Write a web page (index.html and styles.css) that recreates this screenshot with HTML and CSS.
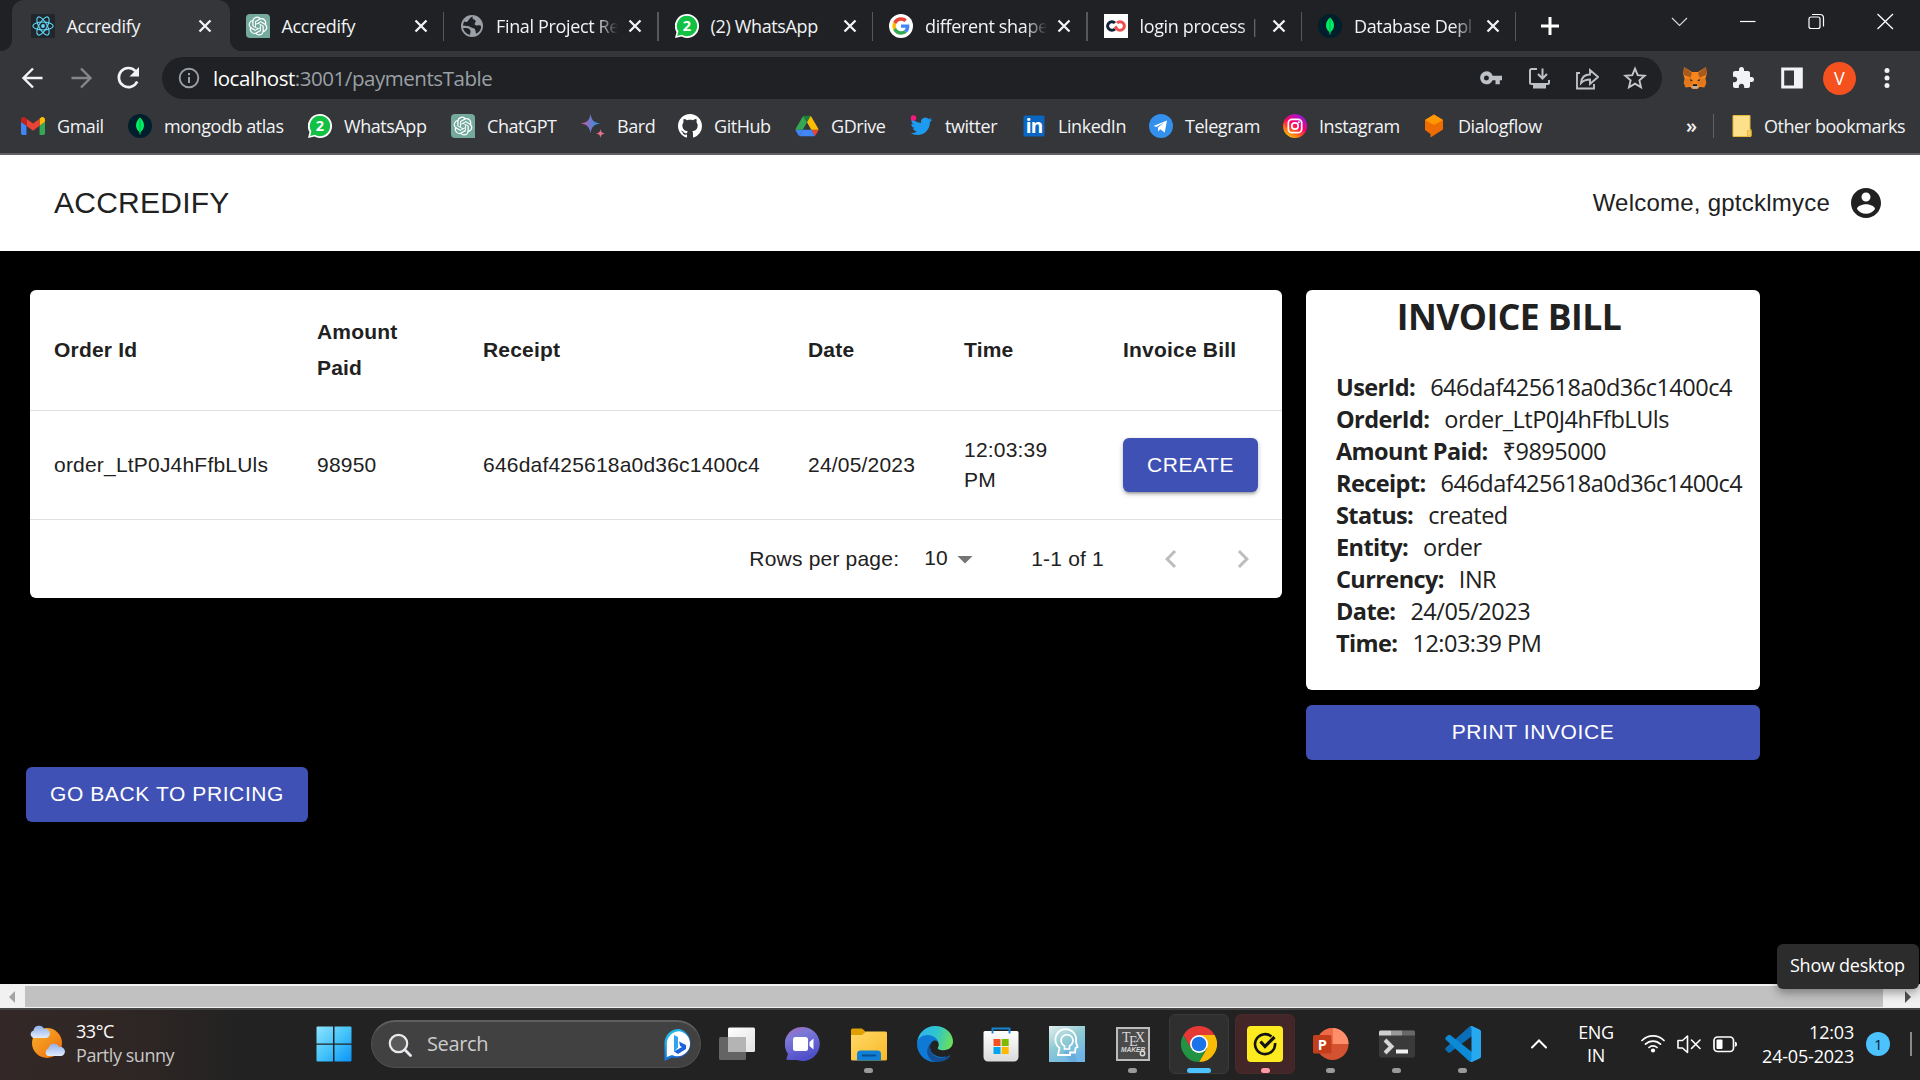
FILE: index.html
```html
<!DOCTYPE html>
<html lang="en">
<head>
<meta charset="utf-8">
<title>Accredify</title>
<link rel="stylesheet" href="styles.css">
</head>
<body>
<svg class="defs" aria-hidden="true">
  <defs>
    <linearGradient id="bardG" x1="0" y1="0" x2="1" y2="0"><stop offset="0" stop-color="#e2627b"/><stop offset=".35" stop-color="#8a6fc4"/><stop offset="1" stop-color="#1b9be8"/></linearGradient>
    <linearGradient id="igG" x1=".2" y1="1" x2=".8" y2="0"><stop offset="0" stop-color="#ffd600"/><stop offset=".3" stop-color="#ff5a1f"/><stop offset=".55" stop-color="#ff0069"/><stop offset="1" stop-color="#8a1bf0"/></linearGradient>
    <linearGradient id="winG" x1="0" y1="0" x2="1" y2="1"><stop offset="0" stop-color="#8fe3ff"/><stop offset=".5" stop-color="#45c4fa"/><stop offset="1" stop-color="#0a94f7"/></linearGradient>
    <linearGradient id="sunG" x1="0" y1="0" x2="1" y2="1"><stop offset="0" stop-color="#f7b32b"/><stop offset="1" stop-color="#ef6c0c"/></linearGradient>
    <linearGradient id="cloudG" x1="0" y1="0" x2="0" y2="1"><stop offset="0" stop-color="#8fb0ea"/><stop offset="1" stop-color="#e3ebfb"/></linearGradient>
    <linearGradient id="bingG" x1="0" y1="0" x2=".6" y2="1"><stop offset="0" stop-color="#22d3ee"/><stop offset="1" stop-color="#1554d1"/></linearGradient>
    <linearGradient id="teamsG" x1="0" y1="0" x2=".4" y2="1"><stop offset="0" stop-color="#a56bb0"/><stop offset=".35" stop-color="#7c78d8"/><stop offset="1" stop-color="#4f4fc9"/></linearGradient>
    <linearGradient id="foldG" x1="0" y1="0" x2="1" y2="1"><stop offset="0" stop-color="#ffd968"/><stop offset="1" stop-color="#f9b928"/></linearGradient>
    <linearGradient id="edgeTop" x1="0" y1=".3" x2="1" y2=".5"><stop offset="0" stop-color="#33b4ee"/><stop offset=".5" stop-color="#2ec4d0"/><stop offset="1" stop-color="#6be05a"/></linearGradient>
    <linearGradient id="headG" x1="0" y1="0" x2=".6" y2="1"><stop offset="0" stop-color="#e4efee"/><stop offset=".5" stop-color="#8fcbd3"/><stop offset="1" stop-color="#6fb6e6"/></linearGradient>
    <linearGradient id="storeG" x1="0" y1="0" x2="0" y2="1"><stop offset="0" stop-color="#fff"/><stop offset="1" stop-color="#dadada"/></linearGradient>
    <linearGradient id="taskG" x1="0" y1="0" x2="1" y2="1"><stop offset="0" stop-color="#fff"/><stop offset="1" stop-color="#e2e2e2"/></linearGradient>
  </defs>
  <symbol id="i-openai" viewBox="0 0 24 24"><path d="M0 4a4 4 0 0 1 4-4h16a4 4 0 0 1 4 4v20H4a4 4 0 0 1-4-4z" fill="#74aa9c"/><path transform="translate(2.6 2.6) scale(.785)" fill="#fff" d="M22.2819 9.8211a5.9847 5.9847 0 0 0-.5157-4.9108 6.0462 6.0462 0 0 0-6.5098-2.9A6.0651 6.0651 0 0 0 4.9807 4.1818a5.9847 5.9847 0 0 0-3.9977 2.9 6.0462 6.0462 0 0 0 .7427 7.0966 5.98 5.98 0 0 0 .511 4.9107 6.051 6.051 0 0 0 6.5146 2.9001A5.9847 5.9847 0 0 0 13.2599 24a6.0557 6.0557 0 0 0 5.7718-4.2058 5.9894 5.9894 0 0 0 3.9977-2.9001 6.0557 6.0557 0 0 0-.7475-7.0729zm-9.022 12.6081a4.4755 4.4755 0 0 1-2.8764-1.0408l.1419-.0804 4.7783-2.7582a.7948.7948 0 0 0 .3927-.6813v-6.7369l2.02 1.1686a.071.071 0 0 1 .038.052v5.5826a4.504 4.504 0 0 1-4.4945 4.4944zm-9.6607-4.1254a4.4708 4.4708 0 0 1-.5346-3.0137l.142.0852 4.783 2.7582a.7712.7712 0 0 0 .7806 0l5.8428-3.3685v2.3324a.0804.0804 0 0 1-.0332.0615L9.74 19.9502a4.4992 4.4992 0 0 1-6.1408-1.6464zM2.3408 7.8956a4.485 4.485 0 0 1 2.3655-1.9728V11.6a.7664.7664 0 0 0 .3879.6765l5.8144 3.3543-2.0201 1.1685a.0757.0757 0 0 1-.071 0l-4.8303-2.7865A4.504 4.504 0 0 1 2.3408 7.872zm16.5963 3.8558L13.1038 8.364 15.1192 7.2a.0757.0757 0 0 1 .071 0l4.8303 2.7913a4.4944 4.4944 0 0 1-.6765 8.1042v-5.6772a.79.79 0 0 0-.407-.667zm2.0107-3.0231l-.142-.0852-4.7735-2.7818a.7759.7759 0 0 0-.7854 0L9.409 9.2297V6.8974a.0662.0662 0 0 1 .0284-.0615l4.8303-2.7866a4.4992 4.4992 0 0 1 6.6802 4.66zM8.3065 12.863l-2.02-1.1638a.0804.0804 0 0 1-.038-.0567V6.0742a4.4992 4.4992 0 0 1 7.3757-3.4537l-.142.0805L8.704 5.459a.7948.7948 0 0 0-.3927.6813zm1.0976-2.3654l2.602-1.4998 2.6069 1.4998v2.9994l-2.5974 1.4997-2.6067-1.4997Z"/></symbol>
  <symbol id="i-whatsapp" viewBox="0 0 24 24"><path d="M12 0a12 12 0 1 1-5.6 22.6L0 24l1.5-6A12 12 0 0 1 12 0z" fill="#fff"/><path d="M12 1.8a10.2 10.2 0 1 1-5.2 19L2.2 22l1.2-4.6A10.2 10.2 0 0 1 12 1.8z" fill="#12c143"/></symbol>
  <symbol id="i-mongo" viewBox="0 0 24 24"><circle cx="12" cy="12" r="12" fill="#001e2b"/><path d="M12 3.6c2.6 2.4 4 5 4 8 0 3.100-1.500 5-3.500 6.600L12.300 20.400h-.6l-.2-2.200C9.500 16.600 8 14.700 8 11.600c0-3 1.400-5.600 4-8z" fill="#00ed64"/><path d="M12 5v15" stroke="#00a34a" stroke-width=".8"/></symbol>
  <symbol id="x" viewBox="0 0 16 16"><path d="M2.500 2.500l11 11M13.500 2.500l-11 11" stroke="#f1f3f4" stroke-width="2.300" fill="none"/></symbol>
</svg>

<header class="browser">
  <div class="tabstrip">
    <div class="tab tab-active">
      <svg class="fav" viewBox="0 0 24 24"><rect width="24" height="24" rx="1.500" fill="#20262b"/><g fill="none" stroke="#61dafb" stroke-width="1.100"><ellipse cx="12" cy="12" rx="10.200" ry="4"/><ellipse cx="12" cy="12" rx="10.200" ry="4" transform="rotate(60 12 12)"/><ellipse cx="12" cy="12" rx="10.200" ry="4" transform="rotate(120 12 12)"/></g><circle cx="12" cy="12" r="1.900" fill="#61dafb"/></svg>
      <span class="tab-title">Accredify</span><svg class="tab-x"><use href="#x"/></svg>
    </div>
    <div class="tab"><svg class="fav"><use href="#i-openai"/></svg><span class="tab-title">Accredify</span><svg class="tab-x"><use href="#x"/></svg></div>
    <div class="tab tab-sep"><svg class="fav" viewBox="0 0 24 24"><circle cx="12" cy="12" r="11" fill="#9aa0a6"/><path d="M13 2.500c-1 1.500-.5 2.500 1 3 2 .6 2 2 1 3.500-1 1.300 0 2.500 2 2.500s3.500-.8 4.200 1.200c-.3 3-2.200 5.800-5 7-.8-1.500-.4-3.200-1.400-4.700-1-1.400-3.300-.8-4.600-2C9 11.900 6 12 3 11.500c0 0 .2-2.600 1.300-4 2 .8 2.700 1 3.700-.5s2-4 5-4.500zM6 14c2.500 0 4 1.300 4.500 3 .4 1.300-.5 2-.5 4-3.500-.8-6-3.500-7-7z" fill="#202124"/></svg><span class="tab-title fade">Final Project Re</span><svg class="tab-x"><use href="#x"/></svg></div>
    <div class="tab tab-sep"><svg class="fav" viewBox="0 0 24 24"><use href="#i-whatsapp"/><text class="wa-count" x="12" y="17.200">2</text></svg><span class="tab-title">(2) WhatsApp</span><svg class="tab-x"><use href="#x"/></svg></div>
    <div class="tab tab-sep"><svg class="fav" viewBox="0 0 24 24"><circle cx="12" cy="12" r="12" fill="#fff"/><g transform="translate(3.300 3.300) scale(.363)"><path fill="#EA4335" d="M24 9.500c3.540 0 6.710 1.220 9.210 3.600l6.850-6.850C35.900 2.380 30.470 0 24 0 14.620 0 6.510 5.380 2.560 13.220l7.980 6.190C12.430 13.720 17.740 9.500 24 9.500z"/><path fill="#4285F4" d="M46.980 24.550c0-1.570-.15-3.090-.38-4.550H24v9.020h12.940c-.58 2.960-2.260 5.480-4.780 7.180l7.730 6c4.510-4.180 7.090-10.360 7.090-17.650z"/><path fill="#FBBC05" d="M10.530 28.590c-.48-1.450-.76-2.990-.76-4.590s.27-3.140.76-4.590l-7.980-6.190C.92 16.460 0 20.120 0 24c0 3.880.92 7.540 2.560 10.780l7.970-6.190z"/><path fill="#34A853" d="M24 48c6.480 0 11.930-2.130 15.890-5.810l-7.730-6c-2.150 1.450-4.920 2.300-8.160 2.300-6.260 0-11.570-4.220-13.470-9.910l-7.980 6.190C6.510 42.620 14.620 48 24 48z"/></g></svg><span class="tab-title fade">different shape</span><svg class="tab-x"><use href="#x"/></svg></div>
    <div class="tab tab-sep"><svg class="fav" viewBox="0 0 24 24"><rect width="24" height="24" fill="#fff"/><path d="M11 9a4.300 4.300 0 1 0 0 6" fill="none" stroke="#0b2239" stroke-width="3"/><path d="M13 9a4.300 4.300 0 1 1 0 6l-2-2.500" fill="none" stroke="#f04e4e" stroke-width="3"/></svg><span class="tab-title fade">login process |</span><svg class="tab-x"><use href="#x"/></svg></div>
    <div class="tab tab-sep"><svg class="fav"><use href="#i-mongo"/></svg><span class="tab-title fade">Database Depl</span><svg class="tab-x"><use href="#x"/></svg></div>
    <div class="newtab"><svg width="20" height="20" viewBox="0 0 20 20"><path d="M10 1v18M1 10h18" stroke="#fff" stroke-width="3"/></svg></div>
    <div class="winctl">
      <svg width="68" height="44" viewBox="0 0 68 44"><path d="M26 18l7.500 7.500L41 18" fill="none" stroke="#d5d6d7" stroke-width="1.200"/></svg>
      <svg width="68" height="44" viewBox="0 0 68 44"><path d="M26 21.500h15.500" stroke="#fff" stroke-width="1.200"/></svg>
      <svg width="69" height="44" viewBox="0 0 69 44"><rect x="27" y="17" width="11" height="11.500" rx="2" fill="none" stroke="#fff" stroke-width="1.200"/><path d="M30 14.500h8a3.500 3.500 0 0 1 3.500 3.500v8.500" fill="none" stroke="#fff" stroke-width="1.200"/></svg>
      <svg width="69" height="44" viewBox="0 0 69 44"><path d="M26.500 14l15.500 15M42 14L26.500 29" stroke="#fff" stroke-width="1.300"/></svg>
    </div>
  </div>

  <div class="toolbar">
    <div class="nav">
      <svg viewBox="0 0 48 48"><path d="M42.500 24H24.500M33 14.500L23.500 24 33 33.500" fill="none" stroke="#f1f3f4" stroke-width="2.400"/></svg>
      <svg viewBox="0 0 48 48"><path d="M23.500 24h18M33 14.500l9.500 9.500-9.500 9.500" fill="none" stroke="#85878a" stroke-width="2.400"/></svg>
      <svg viewBox="0 0 48 48"><path d="M41.200 27.500A9.600 9.600 0 1 1 39.500 17" fill="none" stroke="#f1f3f4" stroke-width="2.600"/><path d="M43 13v9.500h-9.500z" fill="#f1f3f4"/></svg>
    </div>
    <div class="omnibox">
      <svg class="info" viewBox="0 0 22 22"><circle cx="11" cy="11" r="9.300" fill="none" stroke="#9aa0a6" stroke-width="1.900"/><path d="M11 10v6M11 6v2.200" stroke="#9aa0a6" stroke-width="2"/></svg>
      <div class="url"><span class="host">localhost</span>:3001/paymentsTable</div>
      <div class="omni-icons">
        <svg viewBox="0 0 24 24"><path fill-rule="evenodd" fill="#bdc1c6" d="M7.500 5a6.500 6.500 0 0 1 6.100 4.500H23V14h-2.200v4h-4.300v-4h-2.900A6.500 6.500 0 1 1 7.500 5zm0 4.200a2.500 2.500 0 1 0 0 5 2.500 2.500 0 0 0 0-5z" transform="translate(0 .3)"/></svg>
        <svg viewBox="0 0 24 24"><path d="M10 3H4.500A1.500 1.500 0 0 0 3 4.500v12A1.500 1.500 0 0 0 4.500 18h16a1.500 1.500 0 0 0 1.500-1.500V14M15.500 2.500v9M11 8l4.500 4.500L20 8" fill="none" stroke="#bdc1c6" stroke-width="2"/><path d="M6 19h13v3.500H6z" fill="#bdc1c6"/></svg>
        <svg viewBox="0 0 24 24"><path d="M5 7H2v15.500h17V18M6 17c.5-6 4-8.500 9-8.500V4l8 7-8 7v-4.500c-4 0-6.500.8-9 3.500z" fill="none" stroke="#bdc1c6" stroke-width="1.900"/></svg>
        <svg viewBox="0 0 24 24"><path d="M12 2.700l2.700 6.500 7 .6-5.300 4.600 1.600 6.900-6-3.700-6 3.700 1.600-6.900L2.300 9.800l7-.6z" fill="none" stroke="#c4c7cb" stroke-width="1.900"/></svg>
      </div>
    </div>
    <div class="ext">
      <svg viewBox="0 0 24 24"><path d="M1 1l8 5h6l8-5 .8 7-1.500 5 1 4-2 4.500-4.500-.8L14.500 23h-5l-2.300-2.300-4.500.8-2-4.500 1-4L.2 8z" fill="#f6851b"/><path d="M1 1l8 6-1.500 4.500L.8 9zM23 1l-8 6 1.500 4.500L23.200 9z" fill="#a85a1e"/><path d="M1.700 13l6-1.500L10 15l-1 3.500-6 2.200-1.900-4zM22.300 13l-6-1.500L14 15l1 3.500 6 2.200 1.900-4z" fill="#e4761b"/><path d="M7 13l3 1.500-2.500.8zM17 13l-3 1.500 2.500.8z" fill="#233447"/><path d="M9.500 18.500h5l.5 3-1 1h-4l-1-1z" fill="#c0ad9e"/><path d="M10 18.300h4l.3 1.700H9.700z" fill="#161616"/></svg>
      <svg viewBox="0 0 24 24"><path fill="#f1f3f4" d="M20.500 11H19V7c0-1.100-.9-2-2-2h-4V3.500a2.500 2.500 0 0 0-5 0V5H4c-1.100 0-1.990.9-1.990 2v3.800H3.500c1.490 0 2.700 1.210 2.700 2.700s-1.210 2.700-2.700 2.700H2V20c0 1.100.9 2 2 2h3.800v-1.500c0-1.490 1.210-2.700 2.700-2.700s2.700 1.210 2.700 2.700V22H17c1.100 0 2-.9 2-2v-4h1.500a2.500 2.500 0 0 0 0-5z"/></svg>
      <svg viewBox="0 0 24 24"><path d="M1.200 1.500h21.600v21H1.200z" fill="#f1f3f4"/><path d="M4.200 4.500h9.800v15H4.200z" fill="#35363a"/></svg>
      <span class="avatar">V</span>
      <svg viewBox="0 0 24 24"><g fill="#f1f3f4"><circle cx="12" cy="4.500" r="2.500"/><circle cx="12" cy="12" r="2.500"/><circle cx="12" cy="19.500" r="2.500"/></g></svg>
    </div>
  </div>

  <div class="bookmarks">
    <a class="bm"><svg viewBox="52 42 88 66"><path fill="#4285f4" d="M58 108h14V74L52 59v43c0 3.320 2.690 6 6 6"/><path fill="#34a853" d="M120 108h14c3.320 0 6-2.690 6-6V59l-20 15"/><path fill="#fbbc04" d="M120 48v26l20-15v-8c0-7.420-8.470-11.650-14.400-7.200"/><path fill="#ea4335" d="M72 74V48l24 18 24-18v26L96 92"/><path fill="#c5221f" d="M52 51v8l20 15V48l-5.600-4.200c-5.940-4.450-14.400-.22-14.400 7.200"/></svg>Gmail</a>
    <a class="bm"><svg><use href="#i-mongo"/></svg>mongodb atlas</a>
    <a class="bm"><svg viewBox="0 0 24 24"><use href="#i-whatsapp"/><text class="wa-count" x="12" y="17.200">2</text></svg>WhatsApp</a>
    <a class="bm"><svg><use href="#i-openai"/></svg>ChatGPT</a>
    <a class="bm"><svg viewBox="0 0 24 24"><path d="M9.500 0c1 6 3.500 8.500 9.500 9.500-6 1-8.500 3.500-9.500 9.500C8.500 13 6 10.500 0 9.500 6 8.500 8.500 6 9.500 0z" fill="url(#bardG)"/><path d="M19.500 15c.5 3 1.500 4 4.500 4.500-3 .5-4 1.500-4.500 4.500-.5-3-1.500-4-4.500-4.500 3-.5 4-1.500 4.500-4.500z" fill="#e0708c"/></svg>Bard</a>
    <a class="bm"><svg viewBox="0 0 16 16"><path fill="#fff" d="M8 0C3.580 0 0 3.580 0 8c0 3.540 2.290 6.530 5.470 7.590.4.070.55-.17.55-.38 0-.19-.01-.82-.01-1.490-2.010.37-2.530-.49-2.690-.94-.09-.23-.48-.94-.82-1.130-.28-.15-.68-.52-.01-.53.63-.01 1.080.58 1.230.82.72 1.210 1.870.87 2.330.66.070-.52.28-.87.51-1.070-1.780-.2-3.640-.89-3.640-3.950 0-.87.31-1.590.82-2.150-.08-.2-.36-1.020.08-2.120 0 0 .67-.21 2.200.82.64-.18 1.320-.27 2-.27s1.360.09 2 .27c1.530-1.040 2.200-.82 2.200-.82.44 1.100.16 1.920.08 2.120.51.56.82 1.270.82 2.150 0 3.070-1.870 3.750-3.650 3.950.29.25.54.73.54 1.480 0 1.070-.01 1.930-.01 2.200 0 .21.15.46.55.38A8.010 8.010 0 0 0 16 8c0-4.420-3.580-8-8-8z"/></svg>GitHub</a>
    <a class="bm"><svg viewBox="-2 -4 91.300 86"><path d="m6.600 66.850 3.850 6.650c.8 1.400 1.950 2.500 3.300 3.300l13.750-23.800h-27.500c0 1.550.4 3.100 1.200 4.500z" fill="#4285f4"/><path d="m43.650 25-13.750-23.800c-1.350.8-2.500 1.900-3.300 3.300l-25.400 44a9.060 9.060 0 0 0-1.200 4.500h27.500z" fill="#34a853"/><path d="m73.550 76.800c1.350-.8 2.500-1.900 3.300-3.300l1.600-2.750 7.650-13.250c.8-1.400 1.200-2.950 1.200-4.500h-27.502l5.852 11.500z" fill="#ea4335"/><path d="m43.650 25 13.750-23.800c-1.350-.8-2.900-1.200-4.500-1.200h-18.500c-1.600 0-3.150.45-4.500 1.200z" fill="#188038"/><path d="m59.800 53h-32.300l-13.750 23.800c1.350.8 2.900 1.200 4.500 1.200h50.800c1.600 0 3.150-.45 4.500-1.200z" fill="#4285f4"/><path d="m73.400 26.500-12.700-22c-.8-1.400-1.950-2.500-3.300-3.300l-13.750 23.800 16.150 28h27.450c0-1.550-.4-3.100-1.200-4.500z" fill="#fbbc04"/></svg>GDrive</a>
    <a class="bm"><svg viewBox="0 0 24 24"><path fill="#1d9bf0" transform="translate(1.500 1.500) scale(.9)" d="M23.953 4.570a10 10 0 01-2.825.775 4.958 4.958 0 002.163-2.723c-.951.555-2.005.959-3.127 1.184a4.920 4.920 0 00-8.384 4.482C7.690 8.095 4.067 6.130 1.640 3.162a4.822 4.822 0 00-.666 2.475c0 1.710.87 3.213 2.188 4.096a4.904 4.904 0 01-2.228-.616v.06a4.923 4.923 0 003.946 4.827 4.996 4.996 0 01-2.212.085 4.936 4.936 0 004.604 3.417 9.867 9.867 0 01-6.102 2.105c-.39 0-.779-.023-1.170-.067a13.995 13.995 0 007.557 2.209c9.053 0 13.998-7.496 13.998-13.985 0-.21 0-.42-.015-.63A9.935 9.935 0 0024 4.590z"/><circle cx="4.500" cy="4" r="2.700" fill="#f91880"/></svg>twitter</a>
    <a class="bm"><svg viewBox="0 0 24 24"><rect x="1.500" y="1.500" width="21" height="21" rx="1.500" fill="#0a66c2"/><text class="li-mark" x="12" y="19.300">in</text></svg>LinkedIn</a>
    <a class="bm"><svg viewBox="0 0 24 24"><circle cx="12" cy="12" r="12" fill="#3390ec"/><path d="M4.500 12L18 6.500l-2.300 12-4.400-3.300-2.200 2.300-.1-4 6-5-7.500 4.600z" fill="#fff"/></svg>Telegram</a>
    <a class="bm"><svg viewBox="0 0 24 24"><circle cx="12" cy="12" r="12" fill="url(#igG)"/><rect x="5.300" y="5.300" width="13.400" height="13.400" rx="3.800" fill="none" stroke="#fff" stroke-width="1.700"/><circle cx="12" cy="12" r="3.200" fill="none" stroke="#fff" stroke-width="1.700"/><circle cx="15.800" cy="8.200" r="1" fill="#fff"/></svg>Instagram</a>
    <a class="bm"><svg viewBox="0 0 24 24"><path d="M12 .5L21 6v9.500L8.500 23.500V20L3 16V6z" fill="#ef6c00"/><path d="M12 .5L21 6l-9 5-9-5z" fill="#ff9800"/></svg>Dialogflow</a>
    <span class="more">»</span>
    <a class="bm other"><svg viewBox="0 0 20 24"><path d="M1 1.500h17v14h1v7H1z" fill="#ffe08a" stroke="#e3b93e"/><path d="M15.500 22v-5.500h3.500v5.500z" fill="#f7cf5c" stroke="#e3b93e"/></svg>Other bookmarks</a>
  </div>
</header>

<main class="page">
  <div class="appbar">
    <span class="brand">ACCREDIFY</span>
    <div class="user">Welcome, gptcklmyce<svg viewBox="0 0 24 24"><path fill="#212121" d="M12 2C6.480 2 2 6.480 2 12s4.480 10 10 10 10-4.480 10-10S17.520 2 12 2zm0 3c1.660 0 3 1.340 3 3s-1.340 3-3 3-3-1.340-3-3 1.340-3 3-3zm0 14.200c-2.500 0-4.710-1.280-6-3.220.03-1.990 4-3.080 6-3.080 1.990 0 5.970 1.090 6 3.080-1.290 1.940-3.500 3.220-6 3.220z"/></svg></div>
  </div>
  <div class="content">
    <div class="left">
      <section class="card orders">
        <table>
          <colgroup><col class="c1"><col class="c2"><col class="c3"><col class="c4"><col class="c5"><col class="c6"></colgroup>
          <thead><tr><th>Order Id</th><th>Amount<br>Paid</th><th>Receipt</th><th>Date</th><th>Time</th><th>Invoice Bill</th></tr></thead>
          <tbody><tr><td>order_LtP0J4hFfbLUls</td><td>98950</td><td>646daf425618a0d36c1400c4</td><td>24/05/2023</td><td>12:03:39<br>PM</td><td><button class="btn raised">CREATE</button></td></tr></tbody>
        </table>
        <div class="pager">
          <span class="rpp">Rows per page:</span><span class="ten">10</span>
          <svg class="caret" viewBox="0 0 24 24"><path d="M7 10l5 5 5-5z" fill="#757575"/></svg>
          <span class="range">1-1 of 1</span>
          <svg viewBox="0 0 24 24"><path d="M15.410 7.410L14 6l-6 6 6 6 1.410-1.410L10.830 12z" fill="#bdbdbd"/></svg>
          <svg viewBox="0 0 24 24"><path d="M10 6L8.590 7.410 13.170 12l-4.580 4.590L10 18l6-6z" fill="#bdbdbd"/></svg>
        </div>
      </section>
      <button class="btn back">GO BACK TO PRICING</button>
    </div>
    <div class="right">
      <section class="card invoice">
        <h1>INVOICE BILL</h1>
        <dl>
          <div><dt>UserId:</dt><dd>646daf425618a0d36c1400c4</dd></div>
          <div><dt>OrderId:</dt><dd>order_LtP0J4hFfbLUls</dd></div>
          <div><dt>Amount Paid:</dt><dd>₹9895000</dd></div>
          <div><dt>Receipt:</dt><dd>646daf425618a0d36c1400c4</dd></div>
          <div><dt>Status:</dt><dd>created</dd></div>
          <div><dt>Entity:</dt><dd>order</dd></div>
          <div><dt>Currency:</dt><dd>INR</dd></div>
          <div><dt>Date:</dt><dd>24/05/2023</dd></div>
          <div><dt>Time:</dt><dd>12:03:39 PM</dd></div>
        </dl>
      </section>
      <button class="btn print">PRINT INVOICE</button>
    </div>
  </div>
</main>

<div class="scrollbar">
  <svg class="sb-arrow" viewBox="0 0 25 21"><path d="M15 5v12l-6-6z" fill="#a3a3a3"/></svg>
  <div class="thumb"></div>
  <svg class="sb-arrow sb-right" viewBox="0 0 37 21"><path d="M22 5v12l6-6z" fill="#505050"/></svg>
</div>

<footer class="taskbar">
  <div class="weather">
    <svg viewBox="0 0 36 36"><circle cx="18" cy="19" r="15" fill="url(#sunG)"/><path d="M4 14a4 4 0 0 1 .5-7.500A5.500 5.500 0 0 1 15 5a4.600 4.600 0 0 1 2.500 9z" fill="url(#cloudG)"/><path d="M19 32a4 4 0 0 1 .5-7.500A5.500 5.500 0 0 1 30 23a4.600 4.600 0 0 1 2.500 9z" fill="url(#cloudG)"/></svg>
    <div><div class="temp">33°C</div><div class="cond">Partly sunny</div></div>
  </div>
  <div class="app"><svg viewBox="0 0 36 36"><path fill="url(#winG)" d="M1.500.5H17v17H.5v-16a1 1 0 0 1 1-1zM18.500.5h16a1 1 0 0 1 1 1v16h-17zM.5 18.800H17v16.700H1.500a1 1 0 0 1-1-1zM18.500 18.800h17v15.700a1 1 0 0 1-1 1h-16z"/></svg></div>
  <div class="search">
    <svg width="24" height="24" viewBox="0 0 24 24"><circle cx="10.500" cy="10.500" r="8.700" fill="#5a5a5a" stroke="#e8eaed" stroke-width="2.200"/><path d="M16.800 16.800l5.700 5.700" stroke="#e8eaed" stroke-width="2.800" stroke-linecap="round"/></svg>
    <span>Search</span>
    <svg class="bing" width="30" height="32" viewBox="0 0 30 32"><path d="M15.500 0A14.500 14.500 0 1 1 8 28.500L.5 32V16A14.500 14.500 0 0 1 15.500 0z" fill="url(#bingG)"/><path d="M15.500 2.200A12.600 12.600 0 1 1 8 26L2.800 28V15A12.600 12.600 0 0 1 15.500 2.200z" fill="#fff"/><path d="M10 6l4 2v10.500L10 23z" fill="#2fa5f2"/><path d="M15 12.500l7 3.500v4L14 25l-4-2.500 8-4.500-1.800-1z" fill="#1b62e0"/></svg>
  </div>
  <div class="apps">
    <div class="app"><svg viewBox="0 0 36 36"><path d="M0 12.500A1.500 1.500 0 0 1 1.500 11H27v21.500a1.500 1.500 0 0 1-1.500 1.500h-24A1.500 1.500 0 0 1 0 32.500z" fill="#646464"/><rect x="9" y="1.500" width="27" height="24.500" rx="1.500" fill="url(#taskG)"/><path d="M9 11h18v15H10.500A1.500 1.500 0 0 1 9 24.500z" fill="#b4b4b4"/></svg></div>
    <div class="app"><svg viewBox="0 0 36 36"><path d="M18 1a17 17 0 1 1-6 33H2.500c-1 0-1.500-.8-1-1.500l1.500-4.500A17 17 0 0 1 18 1z" fill="url(#teamsG)"/><rect x="8" y="11" width="15" height="14" rx="2.500" fill="#fff"/><path d="M24.500 16l4-3.500v11l-4-3.500z" fill="#fff"/></svg></div>
    <div class="app"><svg viewBox="0 0 36 36"><path d="M0 4a1.500 1.500 0 0 1 1.500-1.500H11L15 6h-1v5H0z" fill="#e0a100"/><path d="M0 9h11l4-3.500h19.500A1.500 1.500 0 0 1 36 7v26a1.500 1.500 0 0 1-1.500 1.500h-33A1.500 1.500 0 0 1 0 33z" fill="url(#foldG)"/><path d="M6 34.500V28a3.500 3.500 0 0 1 3.500-3.500h17A3.500 3.500 0 0 1 30 28v6.500z" fill="#0f80d6"/><path d="M11.500 29.500h13" stroke="#0a4f90" stroke-width="1.800" stroke-linecap="round"/></svg><i></i></div>
    <div class="app"><svg viewBox="0 0 36 36"><path d="M.2 16C1.200 7 8.500 0 18 0c10.500 0 18 7.500 18 15.500 0 5.500-4.500 8.700-9.500 8.700-4 0-6.500-1.200-5.500-2.700 1.300-2 1-5-1-7C16 10.500 5 9.500.2 16z" fill="url(#edgeTop)"/><path d="M0 18C0 12 5.500 9 10.500 9c5 0 9.500 3 10.500 6.500-3.500-2.500-8 .5-8 5.500 0 7 7.500 11.500 16 9.500-3 3.500-7 5.500-11.500 5.500C8 36 0 28 0 18z" fill="#0f7ad6"/><path d="M13.500 17.500c-2.500 8 3.500 15 12 14.200 3-.3 5.500-1.700 6.500-2.200.8-.4 1.500.2 1 1C29.500 35 24 36 19.500 36 10 35 7.500 23 13.500 17.500z" fill="#124f93"/></svg></div>
    <div class="app"><svg viewBox="0 0 36 36"><path d="M.5 6.500a1.500 1.500 0 0 1 1.500-1.500h32a1.500 1.500 0 0 1 1.500 1.500V31a4.500 4.500 0 0 1-4.500 4.500H5A4.500 4.500 0 0 1 .5 31z" fill="url(#storeG)"/><path d="M9.500 7.500V2.500h17v5" fill="none" stroke="#1686d0" stroke-width="1.900"/><path d="M10.500 13h7v7h-7z" fill="#f25022"/><path d="M18.700 13h7v7h-7z" fill="#7fba00"/><path d="M10.500 21h7v7h-7z" fill="#00a4ef"/><path d="M18.700 21h7v7h-7z" fill="#ffb900"/></svg></div>
    <div class="app"><svg viewBox="0 0 36 36"><path fill="url(#headG)" d="M0 0h36v36H0z"/><path d="M14 26l5-2 7 4 2 8H22z" fill="#5b9fd8" opacity=".45"/><path d="M9 29l1.500-7A10.500 10.500 0 1 1 27 16l1.500 5-2 1-.5 4.500h-5V29z" fill="none" stroke="#fff" stroke-width="1.800"/><path d="M15.500 23v-3a6 6 0 1 1 5 0v3z" fill="none" stroke="#fff" stroke-width="1.700"/></svg></div>
    <div class="app"><svg viewBox="0 0 36 36"><rect x="2" y="2" width="32" height="32" fill="#4a4a4a" stroke="#bcbcbc" stroke-width="2"/><g class="tex"><text x="7" y="16">T</text><text x="14" y="19.500">E</text><text x="20" y="16">X</text><text class="maker" x="6" y="25.500">MAKER</text></g><circle cx="27.500" cy="27.500" r="2.200" fill="none" stroke="#d8d8d8" stroke-width="1.500"/></svg><i></i></div>
    <div class="app app-on"><svg viewBox="0 0 48 48"><path d="M44.800 12A24 24 0 0 1 24 48l10.400-18L24 12z" fill="#fbbc05"/><path d="M3.200 12A24 24 0 0 0 24 48l10.400-18H13.600z" fill="#229342"/><path d="M24 12h20.800A24 24 0 0 0 3.200 12l10.400 18z" fill="#e53935"/><circle cx="24" cy="24" r="12" fill="#fff"/><circle cx="24" cy="24" r="9.800" fill="#1a73e8"/></svg><i class="run"></i></div>
    <div class="app app-alert"><svg viewBox="0 0 36 36"><rect width="36" height="36" rx="4" fill="#fdeb1f"/><path d="M24.500 10.500A10 10 0 1 0 28 17" fill="none" stroke="#141414" stroke-width="2.600"/><path d="M13.500 15.500l4.500 5 9.500-9.500" fill="none" stroke="#141414" stroke-width="3.200"/></svg><i></i></div>
    <div class="app"><svg viewBox="0 0 36 36"><circle cx="19.500" cy="18" r="16" fill="#d35230"/><path d="M19.500 2a16 16 0 0 1 16 16h-16z" fill="#ff8f6b"/><path d="M19.500 2v16H3.500a16 16 0 0 1 16-16z" fill="#ed6c47"/><rect x="0" y="9" width="18.500" height="18.500" rx="1.500" fill="#c43e1c"/><text class="ppt" x="9.200" y="23.500">P</text></svg><i></i></div>
    <div class="app"><svg viewBox="0 0 36 36"><rect x="0" y="4.500" width="36" height="27" rx="2" fill="#3a3a3a"/><path d="M0 9.500v-3.500a1.500 1.500 0 0 1 1.500-1.500H12v5z" fill="#d0d0d0"/><path d="M12 4.500h11v5H12z" fill="#9a9a9a"/><path d="M23 4.500h11.500A1.500 1.500 0 0 1 36 6v3.500H23z" fill="#686868"/><path d="M6 14l6.500 6.500L6 27" fill="none" stroke="#d6d6d6" stroke-width="4"/><path d="M17 25.500h12" stroke="#f2f2f2" stroke-width="4"/></svg><i></i></div>
    <div class="app"><svg viewBox="0 0 36 36"><path d="M27 0l-3 1L1 21.500c-1 1-1 2 0 3l2 1.800c.8.700 1.700.700 2.500 0L27 10z" fill="#0a6fb8"/><path d="M27 36l-3-1L1 14c-1-1-1-2 0-3l2-1.800c.8-.7 1.700-.7 2.500 0L27 26z" fill="#0c8ad6"/><path d="M24.500 35.200c1.200 0 2-.9 2-2V2.800c0-1.200-.8-2-2-2L27 0l7.500 3.500c1 .5 1.500 1.200 1.500 2.300v24.400c0 1.100-.5 1.800-1.500 2.300L27 36z" fill="#27a9f2"/></svg><i></i></div>
  </div>
  <div class="tray">
    <svg class="t-chev" viewBox="0 0 48 24"><path d="M17 15.500l7-7 7 7" fill="none" stroke="#fff" stroke-width="2" stroke-linecap="round"/></svg>
    <div class="lang">ENG<br>IN</div>
    <div class="status">
      <svg viewBox="0 0 24 24"><g fill="none" stroke="#fff" stroke-width="1.700" stroke-linecap="round"><path d="M1 8.500a15.500 15.500 0 0 1 22 0M4.500 12.200a10.500 10.500 0 0 1 15 0M8 15.500a5.700 5.700 0 0 1 8 0"/></g><circle cx="12" cy="18.500" r="2.100" fill="#fff"/></svg>
      <svg viewBox="0 0 24 24"><path d="M10.500 4v16.500L5.500 16H1V8.500h4.500z" fill="none" stroke="#fff" stroke-width="1.600" stroke-linejoin="round"/><path d="M14.500 8l8.500 8.500M23 8l-8.500 8.500" stroke="#fff" stroke-width="1.600" stroke-linecap="round"/></svg>
      <svg viewBox="0 0 24 24"><rect x="1" y="5" width="19.500" height="14.500" rx="3.500" fill="none" stroke="#fff" stroke-width="1.700"/><rect x="3.500" y="7.500" width="6" height="9.500" rx="1" fill="#fff"/><path d="M22 9.800c1.300.2 2 1 2 2.400s-.7 2.300-2 2.500z" fill="#fff"/></svg>
    </div>
    <div class="clock">12:03<br>24-05-2023</div>
    <span class="badge">1</span>
    <span class="peek"></span>
  </div>
</footer>
<div class="tooltip">Show desktop</div>
</body>
</html>
```
FILE: styles.css
```css
* { box-sizing: border-box; }
html, body { margin: 0; height: 100%; overflow: hidden; }
body {
  display: flex;
  flex-direction: column;
  width: 1920px;
  height: 1080px;
  font-family: "Open Sans", "Noto Sans", sans-serif;
  font-size: 18px;
  letter-spacing: -.35px;
  background: #000;
  white-space: nowrap;
}
svg { display: block; flex: none; }
.defs { position: absolute; width: 0; height: 0; }

/* lettering inside icons */
.wa-count, .li-mark, .ppt { font-weight: 700; text-anchor: middle; letter-spacing: 0; fill: #fff; }
.wa-count { font-size: 14.5px; }
.li-mark { font-size: 19px; letter-spacing: -.8px; }
.ppt { font-size: 14.5px; }
.tex { fill: #d8d8d8; font: 14px "Liberation Serif", serif; letter-spacing: 0; }
.maker { font: italic 700 6.6px "Liberation Sans", sans-serif; }

/* browser chrome */
.browser { height: 155px; flex: none; background: #35363a; border-bottom: 2px solid #5f6165; color: #f1f3f4; }
.tabstrip { display: flex; height: 51px; padding-left: 15px; background: #202124; }
.tab { position: relative; display: flex; align-items: center; width: 214.5px; height: 51px; padding: 1px 16px 0 15.5px; }
.tab .fav { width: 24px; height: 24px; }
.tab-title { flex: 1; margin: 0 8px 0 12px; line-height: 26px; }
.fade { -webkit-mask-image: linear-gradient(90deg, #000 100px, transparent 122px); mask-image: linear-gradient(90deg, #000 100px, transparent 122px); }
.tab-x { width: 16px; height: 16px; margin-bottom: 1px; }
.tab-active { background: #35363a; border-radius: 12px 12px 0 0; width: 218px; margin: 0 0 0 -3px; padding: 1px 17px 0 18.5px; }
.tab-active::before, .tab-active::after { content: ""; position: absolute; bottom: 0; width: 12px; height: 12px; }
.tab-active::before { left: -12px; background: radial-gradient(circle at 0 0, transparent 12px, #35363a 12.5px); }
.tab-active::after { right: -12px; background: radial-gradient(circle at 100% 0, transparent 12px, #35363a 12.5px); }
.tab-sep::before { content: ""; position: absolute; left: -2px; top: 12px; width: 1.5px; height: 29px; background: #56585c; }
.tabstrip .tab:nth-child(7)::after { content: ""; position: absolute; right: 1px; top: 12px; width: 1.5px; height: 29px; background: #56585c; }
.newtab { display: flex; align-items: center; justify-content: center; width: 65px; height: 51px; }
.winctl { display: flex; margin-left: auto; }

.toolbar { display: flex; align-items: center; height: 54px; padding-right: 9px; }
.nav { display: flex; width: 162px; }
.nav svg { width: 48px; height: 48px; }
.omnibox { display: flex; align-items: center; width: 1500px; height: 42px; padding: 0 15px 0 16px; border-radius: 21px; background: #202124; }
.info { width: 22px; height: 22px; }
.url { margin-left: 13px; font-size: 20.5px; letter-spacing: -.45px; color: #9aa0a6; line-height: 30px; }
.host { color: #fff; }
.omni-icons { display: flex; gap: 24px; margin-left: auto; }
.omni-icons svg, .ext svg { width: 24px; height: 24px; }
.ext { display: flex; align-items: center; justify-content: space-between; flex: 1; padding: 0 12px 0 21px; }
.avatar { width: 33px; height: 33px; margin: 0 -5px; border-radius: 50%; background: #f4511e; color: #fff; font-size: 18px; line-height: 33px; text-align: center; }

.bookmarks { display: grid; grid-template-columns: 107px 180px 143px 130px 97px 117px 114px 113px 127px 134px 139px 240px 51px 1fr; align-items: center; height: 42px; padding-left: 21px; letter-spacing: -.45px; }
.bm { display: flex; align-items: center; gap: 12px; line-height: 26px; }
.bm svg { width: 24px; height: 24px; }
.more { padding-left: 24px; font-size: 20px; font-weight: 600; line-height: 24px; }
.other { padding-left: 18px; height: 24px; border-left: 1.5px solid #5f6165; }
.other svg { width: 20px; }

/* web page */
.page { height: 829px; flex: none; background: #000; font-family: "Liberation Sans", Arial, sans-serif; letter-spacing: .2px; color: #212121; }
.appbar { display: flex; align-items: center; justify-content: space-between; height: 96px; padding: 0 36px 0 54px; background: #fff; }
.brand { font-size: 30px; line-height: 46px; letter-spacing: .25px; padding-bottom: 1px; }
.user { display: flex; align-items: center; gap: 18px; font-size: 24px; letter-spacing: .23px; }
.user svg { width: 36px; height: 36px; }
.content { display: flex; align-items: flex-start; gap: 24px; padding: 39px 0 0 30px; }
.card { background: #fff; border-radius: 6px; overflow: hidden; }
.left { width: 1252px; }
.orders { height: 308px; font-size: 21px; }
.orders table { width: 1252px; border-collapse: separate; border-spacing: 0; table-layout: fixed; }
.c1 { width: 263px; } .c2 { width: 166px; } .c3 { width: 325px; } .c4 { width: 156px; } .c5 { width: 159px; } .c6 { width: 183px; }
th, td { padding: 0 0 0 24px; text-align: left; vertical-align: middle; border-bottom: 1px solid #e0e0e0; }
th { height: 121px; line-height: 36px; font-weight: 700; }
td { height: 109px; line-height: 30px; }
.btn { display: flex; align-items: center; justify-content: center; height: 55px; padding: 0 0 2px; border: 0; border-radius: 6px; background: #3f51b5; color: #fff; font: 21px/37px "Liberation Sans", Arial, sans-serif; letter-spacing: .6px; }
.raised { width: 135px; height: 54px; box-shadow: 0 3px 3px -2px rgba(0,0,0,.3), 0 2px 5px rgba(0,0,0,.25); }
.pager { display: flex; align-items: center; justify-content: flex-end; height: 78px; padding-right: 21px; }
.pager svg { width: 36px; height: 36px; margin-left: 36px; }
.pager .caret { margin-left: 0; }
.ten { width: 23px; margin-left: 25px; margin-top: -2px; }
.range { margin-left: 48px; margin-right: 13px; }
.back { width: 282px; margin: 169px 0 0 -4px; }
.right { width: 454px; }
.invoice { height: 400px; padding: 2px 0 0 30px; font-family: "Open Sans", "Noto Sans", sans-serif; font-size: 23.5px; letter-spacing: -.5px; }
.invoice h1 { margin: 0 78px 31px 0; font-size: 35.5px; line-height: 48px; letter-spacing: -.55px; text-align: center; font-weight: 700; }
.invoice dl { margin: 0; line-height: 32px; }
.invoice dl div { display: flex; gap: 15px; }
.invoice dt { font-weight: 700; letter-spacing: -.6px; }
.invoice dd { margin: 0; }
.print { width: 454px; margin-top: 15px; }

/* horizontal scrollbar */
.scrollbar { display: flex; height: 24px; flex: none; padding: 2px 0 1px; background: #f1f1f1; }
.sb-arrow { width: 25px; height: 21px; }
.sb-right { width: 37px; }
.thumb { flex: 1; background: #c1c1c1; }

/* taskbar */
.taskbar { display: flex; align-items: center; height: 72px; flex: none; padding-bottom: 2px; border-top: 2px solid #444; color: #fff; background: linear-gradient(90deg, #332827 0, #302725 110px, #222 250px); }
.weather { display: flex; align-items: center; gap: 11px; width: 301px; padding-left: 29px; padding-bottom: 2px; line-height: 24px; letter-spacing: -.45px; }
.weather svg { width: 36px; height: 36px; margin-bottom: 2px; }
.cond { color: #c8c8c8; }
.app { position: relative; display: flex; align-items: center; justify-content: center; width: 66px; height: 60px; }
.app svg { width: 36px; height: 36px; }
.app i { position: absolute; left: 28px; bottom: 1px; width: 9px; height: 5px; border-radius: 3px; background: #9a9a9a; }
.app-on, .app-alert { width: 60px; margin: 0 3px; border-radius: 6px; background: #2f2f2f; border: 1px solid #3a3a3a; }
.app-alert { background: #432627; border-color: #482a2b; }
.app-alert i { left: 25px; bottom: 0; background: #ff99a4; }
.app i.run { left: 17px; bottom: 0; width: 24px; background: #4cc2ff; }
.search { display: flex; align-items: center; width: 330px; height: 48px; margin: 0 3px 0 4px; padding: 0 6px 0 16px; border-radius: 24px; background: #414141; border: 1px solid #505050; border-top: 2px solid #5e5e5e; font-size: 20px; color: #ccc; line-height: 28px; }
.search span { margin-left: 15px; padding-bottom: 1px; }
.bing { margin-left: auto; }
.apps { display: flex; }
.tray { display: flex; align-items: center; flex: 1; padding-left: 19px; line-height: 24px; }
.t-chev { width: 48px; height: 24px; }
.lang { width: 66px; text-align: center; line-height: 23px; }
.status { display: flex; gap: 12px; padding-left: 12px; }
.status svg { width: 24px; height: 24px; }
.clock { width: 117px; padding-bottom: 1px; text-align: right; letter-spacing: -.2px; }
.badge { width: 24px; height: 24px; margin-left: 12px; border-radius: 50%; background: #4cc2ff; color: #10242f; font-size: 15px; line-height: 24px; text-align: center; }
.peek { width: 2px; height: 24px; margin-left: 20px; background: #8a8a8a; }
.tooltip { position: absolute; left: 1777px; top: 944px; width: 142px; height: 45px; padding-left: 13px; border-radius: 6px; background: #2c2c2c; color: #fff; line-height: 43px; letter-spacing: -.25px; box-shadow: 0 4px 10px rgba(0,0,0,.35); }
```
